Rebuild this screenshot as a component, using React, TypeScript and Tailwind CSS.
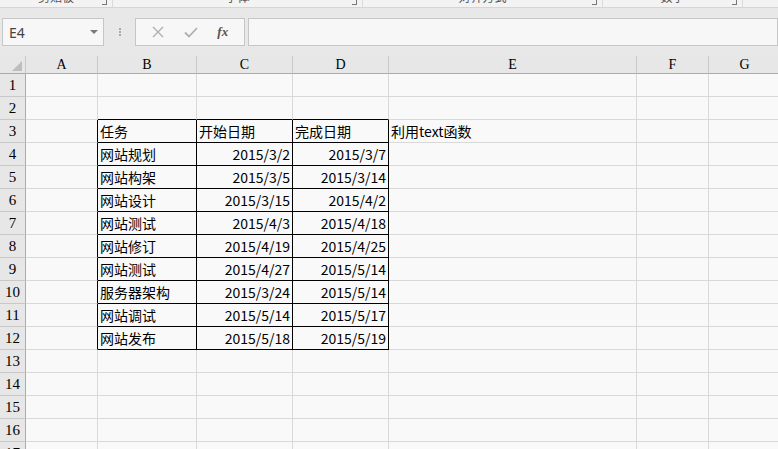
import React from 'react';

const cols = ['A', 'B', 'C', 'D', 'E', 'F', 'G'];

const rows: Record<number, string[]> = {
  3: ['任务', '开始日期', '完成日期', '利用text函数'],
  4: ['网站规划', '2015/3/2', '2015/3/7'],
  5: ['网站构架', '2015/3/5', '2015/3/14'],
  6: ['网站设计', '2015/3/15', '2015/4/2'],
  7: ['网站测试', '2015/4/3', '2015/4/18'],
  8: ['网站修订', '2015/4/19', '2015/4/25'],
  9: ['网站测试', '2015/4/27', '2015/5/14'],
  10: ['服务器架构', '2015/3/24', '2015/5/14'],
  11: ['网站调试', '2015/5/14', '2015/5/17'],
  12: ['网站发布', '2015/5/18', '2015/5/19'],
};

const cjk = { fontFamily: '"Noto Sans CJK SC", "Noto Sans", sans-serif' };
const serif = { fontFamily: '"Liberation Serif", "DejaVu Serif", serif' };

function Cell({ r, c }: { r: number; c: number }) {
  const data = rows[r];
  const inTable = r >= 3 && r <= 12;
  const blackRight = inTable && c >= 0 && c <= 3;
  const blackBottom = r >= 2 && r <= 12 && c >= 1 && c <= 3;
  let text = '';
  let right = false;
  if (data) {
    if (c === 1) text = data[0];
    if (c === 2) text = data[1];
    if (c === 3) text = data[2];
    if (c === 4 && data[3]) text = data[3];
    right = r >= 4 && (c === 2 || c === 3);
  }
  return (
    <div
      className={`h-[23px] border-r border-b flex items-center overflow-visible whitespace-nowrap text-[14px] text-black px-[2px] ${
        right ? 'justify-end' : 'justify-start'
      } ${blackRight ? 'border-r-black' : 'border-r-[#d9d9d9]'} ${
        blackBottom ? 'border-b-black' : 'border-b-[#d9d9d9]'
      }`}
      style={cjk}
    >
      {text}
    </div>
  );
}

function RibbonStub() {
  const groups = [
    { w: 113, label: '剪贴板' },
    { w: 250, label: '字体' },
    { w: 240, label: '对齐方式' },
    { w: 140, label: '数字' },
  ];
  return (
    <div className="h-[8px] bg-[#f3f3f3] border-b border-[#d5d5d5] flex overflow-hidden">
      {groups.map((g, i) => (
        <div key={i} className="relative flex-none h-full border-r border-[#dadada]" style={{ width: g.w }}>
          <span className="absolute left-0 right-0 text-center text-[12px] text-[#555] top-[-12px]" style={cjk}>
            {g.label}
          </span>
          <span className="absolute right-[5px] top-[0px] w-[5px] h-[5px] border-r border-b border-[#777]" />
        </div>
      ))}
    </div>
  );
}

function FormulaBar() {
  return (
    <div className="h-[48px] bg-[#e8e8e8] flex items-start pt-[10px] pl-[2px]">
      <div className="w-[102px] h-[28px] bg-[#f7f7f7] border border-[#c6c6c6] flex items-center justify-between pl-[6px] pr-[5px]">
        <span className="text-[14px] text-[#444]" style={{ fontFamily: '"Noto Sans", sans-serif' }}>E4</span>
        <svg width="8" height="5" viewBox="0 0 8 5"><path d="M0 0h8L4 4z" fill="#7a7a7a" /></svg>
      </div>
      <div className="w-[31px] h-[28px] flex flex-col items-center justify-center gap-[1px]">
        <span className="w-[2px] h-[2px] bg-[#a8a8a8]" />
        <span className="w-[2px] h-[2px] bg-[#a8a8a8]" />
        <span className="w-[2px] h-[2px] bg-[#a8a8a8]" />
      </div>
      <div className="w-[110px] h-[28px] bg-[#f7f7f7] border border-[#c6c6c6] flex items-center justify-around px-[6px]">
        <svg width="12" height="12" viewBox="0 0 12 12">
          <path d="M1 1l10 10M11 1L1 11" stroke="#b0b0b0" strokeWidth="1.4" />
        </svg>
        <svg width="14" height="11" viewBox="0 0 14 11">
          <path d="M1 5.5l4 4L13 1" stroke="#b0b0b0" strokeWidth="1.8" fill="none" />
        </svg>
        <span className="text-[13px] italic text-[#555] font-semibold" style={serif}>fx</span>
      </div>
      <div className="flex-1 ml-[3px] h-[28px] bg-[#f7f7f7] border border-[#c6c6c6]" />
    </div>
  );
}

export default function App() {
  const rowNums = Array.from({ length: 17 }, (_, i) => i + 1);
  return (
    <div className="w-[778px] h-[449px] overflow-hidden bg-[#f9f9f9]">
      <RibbonStub />
      <FormulaBar />
      <div className="grid grid-cols-[26px_72px_99px_96px_96px_248px_72px_72px] w-[781px]">
        <div className="h-[18px] bg-[#e7e7e7] border-r border-b border-r-[#c8c8c8] border-b-[#ababab] flex items-end justify-end pr-[3px] pb-[2px]">
          <svg width="10" height="10" viewBox="0 0 10 10"><path d="M10 0V10H0z" fill="#bdbdbd" /></svg>
        </div>
        {cols.map((c) => (
          <div
            key={c}
            className="h-[18px] bg-[#e7e7e7] border-r border-b border-r-[#c8c8c8] border-b-[#ababab] flex items-center justify-center text-[14px] text-black"
            style={serif}
          >
            {c}
          </div>
        ))}
        {rowNums.map((r) => (
          <React.Fragment key={r}>
            <div
              className="h-[23px] bg-[#e7e7e7] border-r border-b border-r-[#ababab] border-b-[#c8c8c8] flex items-center justify-center text-[15px] text-black"
              style={serif}
            >
              {r}
            </div>
            {cols.map((_, c) => (
              <Cell key={c} r={r} c={c} />
            ))}
          </React.Fragment>
        ))}
      </div>
    </div>
  );
}
